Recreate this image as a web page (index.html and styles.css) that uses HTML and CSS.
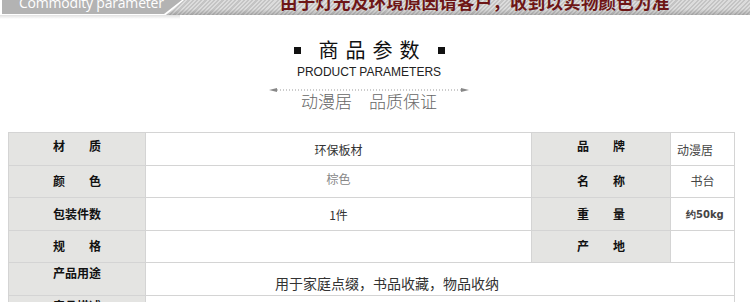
FILE: index.html
```html
<!DOCTYPE html>
<html lang="zh">
<head>
<meta charset="utf-8">
<link rel="stylesheet" href="styles.css">
</head>
<body>
<div class="topbar">
  <div class="tab"><span class="tab-text">Commodity parameter</span></div>
  <div class="notice">由于灯光及环境原因请客户，收到以实物颜色为准</div>
</div>
<div class="shadow"></div>
<div class="heading">
  <div class="title"><span class="sq"></span><span class="title-text">商品参数</span><span class="sq"></span></div>
  <div class="subtitle">PRODUCT PARAMETERS</div>
  <div class="divider">
    <svg width="200" height="6" viewBox="0 0 200 6">
      <path d="M0 3 L8 1 L8 5 Z M200 3 L192 1 L192 5 Z" fill="#888"/>
      <line x1="8" y1="3" x2="192" y2="3" stroke="#999" stroke-width="1" stroke-dasharray="1 2"/>
    </svg>
  </div>
  <div class="slogan">动漫居　品质保证</div>
</div>
<table class="params">
  <colgroup><col class="c1"><col class="c2"><col class="c3"><col class="c4"></colgroup>
  <tr>
    <th class="lbl top">材　　质</th><td class="val low">环保板材</td>
    <th class="lbl top">品　　牌</th><td class="val-r low left">动漫居</td>
  </tr>
  <tr>
    <th class="lbl">颜　　色</th><td class="val top grey">棕色</td>
    <th class="lbl">名　　称</th><td class="val-r">书台</td>
  </tr>
  <tr>
    <th class="lbl">包装件数</th><td class="val low">1件</td>
    <th class="lbl">重　　量</th><td class="val-r low kg">约50kg</td>
  </tr>
  <tr>
    <th class="lbl">规　　格</th><td class="val"></td>
    <th class="lbl">产　　地</th><td class="val-r"></td>
  </tr>
  <tr>
    <th class="lbl top tight">产品用途</th><td class="val use" colspan="3">用于家庭点缀，书品收藏，物品收纳</td>
  </tr>
  <tr>
    <th class="lbl top tight">产品描述</th><td class="val" colspan="3"></td>
  </tr>
</table>
</body>
</html>
```
FILE: styles.css
```css
html, body {
  margin: 0;
  padding: 0;
  background: #fff;
  overflow: hidden;
}
body {
  width: 750px;
  height: 302px;
  font-family: "Noto Sans CJK SC", "Liberation Sans", sans-serif;
}
.topbar {
  height: 15px;
  display: flex;
  align-items: stretch;
  overflow: hidden;
  background:
    linear-gradient(to bottom, rgba(0,0,0,0) 60%, rgba(0,0,0,0.18) 100%),
    repeating-linear-gradient(-45deg, #dcdcdc 0px, #dcdcdc 1.5px, #c4c4c4 1.5px, #c4c4c4 3px);
}
.tab {
  width: 184px;
  flex: none;
  background: #fff;
  clip-path: polygon(0 0, 184px 0, 166px 15px, 0 15px);
  position: relative;
}
.tab::before {
  content: "";
  position: absolute;
  inset: 0 0 1px 2px;
  background: #b3b3b3;
  clip-path: polygon(0 0, 180px 0, 162px 14px, 0 14px);
}
.tab-text {
  position: relative;
  display: block;
  margin-left: 19px;
  margin-top: -7px;
  font-family: "Open Sans", sans-serif;
  font-size: 14px;
  line-height: 20px;
  color: #fff;
  letter-spacing: -0.2px;
}
.notice {
  margin-left: 96px;
  margin-top: -9px;
  font-size: 17.5px;
  line-height: 22px;
  font-weight: 700;
  color: #6e1616;
  white-space: nowrap;
  letter-spacing: 0.2px;
}
.shadow {
  height: 4px;
  background: linear-gradient(to bottom, rgba(0,0,0,0.12), rgba(0,0,0,0));
  width: 180px;
}
.heading {
  display: flex;
  flex-direction: column;
  align-items: center;
  width: 738px;
  margin-top: 19px;
}
.title {
  display: flex;
  align-items: center;
  gap: 18px;
  height: 24px;
}
.sq {
  width: 7px;
  height: 7px;
  background: #111;
}
.title-text {
  font-size: 20px;
  line-height: 24px;
  letter-spacing: 7px;
  margin-right: -7px;
  color: #111;
}
.subtitle {
  margin-top: 3px;
  font-family: "Liberation Sans", Arial, sans-serif;
  font-size: 12px;
  line-height: 14px;
  color: #222;
}
.divider {
  margin-top: 7px;
  height: 6px;
  line-height: 0;
}
.slogan {
  margin-top: -1px;
  font-size: 17px;
  line-height: 20px;
  color: #666;
  font-weight: 300;
}
.params {
  margin: 21px 0 0 8px;
  width: 726px;
  border-collapse: collapse;
  table-layout: fixed;
  font-size: 12px;
}
.c1 { width: 137px; }
.c2 { width: 386px; }
.c3 { width: 139px; }
.c4 { width: 64px; }
.params tr { height: 32.5px; }
.params th, .params td {
  border: 1px solid #d4d4d4;
  padding: 0;
  line-height: 16px;
}
.params .lbl {
  background: #e4e4e2;
  font-weight: 700;
  color: #111;
  text-align: center;
  vertical-align: middle;
}
.params .lbl.top { vertical-align: top; padding-top: 5px; }
.params .lbl.tight { padding-top: 2px; }
.params .val {
  text-align: center;
  color: #333;
  vertical-align: middle;
}
.params .val-r {
  text-align: center;
  color: #444;
  vertical-align: middle;
}
.params .low { vertical-align: bottom; padding-bottom: 7px; }
.params .val.top { vertical-align: top; padding-top: 5px; }
.params .left { text-align: left; padding-left: 6px; }
.params .grey { color: #888; }
.params .kg {
  font-family: "DejaVu Sans", sans-serif;
  font-weight: 700;
  font-size: 10px;
  text-align: left;
  padding-left: 15px;
}
.params .use {
  font-size: 14px;
  vertical-align: bottom;
  padding-bottom: 4px;
  text-align: left;
  padding-left: 129px;
}
```
